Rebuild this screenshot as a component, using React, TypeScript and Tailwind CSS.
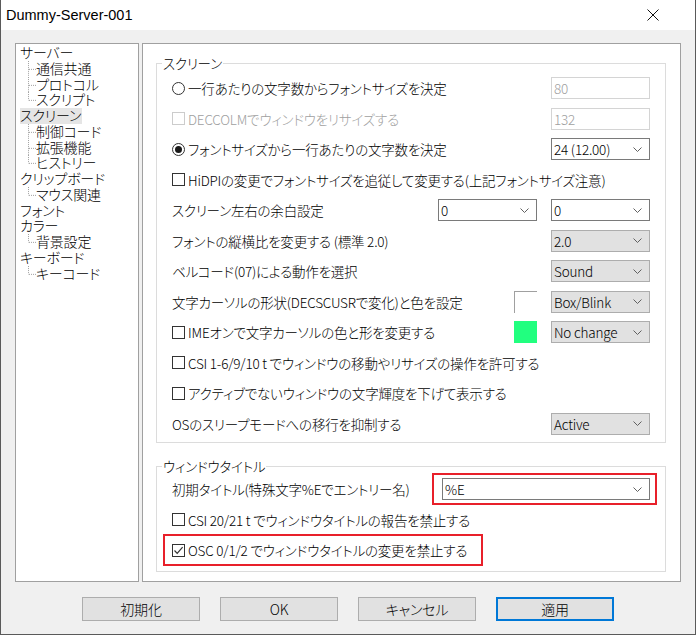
import type { ReactNode } from 'react'

const TREE: { label: string; children?: string[]; active?: boolean }[] = [
  { label: 'サーバー', children: ['通信共通', 'プロトコル', 'スクリプト'] },
  { label: 'スクリーン', children: ['制御コード', '拡張機能', 'ヒストリー'], active: true },
  { label: 'クリップボード', children: ['マウス関連'] },
  { label: 'フォント' },
  { label: 'カラー', children: ['背景設定'] },
  { label: 'キーボード', children: ['キーコード'] },
]

function Branch({ last }: { last: boolean }) {
  return (
    <svg viewBox="0 0 16 16" preserveAspectRatio="none" className="h-[15.75px] w-[16px] shrink-0">
      <line x1="8.5" y1="0" x2="8.5" y2={last ? 8.5 : 16} stroke="#a0a0a0" strokeDasharray="1 1" />
      <line x1="9" y1="8.5" x2="16" y2="8.5" stroke="#a0a0a0" strokeDasharray="1 1" />
    </svg>
  )
}

function Chevron() {
  return (
    <svg width="9" height="5" viewBox="0 0 9 5" className="shrink-0">
      <path d="M0.5 0.5 L4.5 4.5 L8.5 0.5" fill="none" stroke="#606060" strokeWidth="1" />
    </svg>
  )
}

function Select({ value, edit = false, w = 'w-[99px]' }: { value: string; edit?: boolean; w?: string }) {
  return (
    <div
      className={`flex h-[22px] ${w} shrink-0 items-center justify-between border pl-[2px] pr-[7px] ${
        edit ? 'border-[#7a7a7a] bg-white' : 'border-[#adadad] bg-[#e1e1e1]'
      }`}
    >
      <span>{value}</span>
      <Chevron />
    </div>
  )
}

function DisabledInput({ value }: { value: string }) {
  return (
    <div className="flex h-[22px] w-[99px] items-center border border-[#d4d4d4] bg-white pl-[2px] text-[#a0a0a0]">
      {value}
    </div>
  )
}

function Checkbox({ checked = false, disabled = false }: { checked?: boolean; disabled?: boolean }) {
  return (
    <span
      className={`mr-[3px] flex h-[13px] w-[13px] shrink-0 items-center justify-center border bg-white ${
        disabled ? 'border-[#cccccc]' : 'border-[#333333]'
      }`}
    >
      {checked && (
        <svg width="11" height="11" viewBox="0 0 11 11">
          <path d="M1.5 5.5 L4.2 8.3 L9.6 2.2" fill="none" stroke="#333333" strokeWidth="1.2" />
        </svg>
      )}
    </span>
  )
}

function Radio({ checked = false }: { checked?: boolean }) {
  return (
    <span className="mr-[3px] flex h-[13px] w-[13px] shrink-0 items-center justify-center rounded-full border border-[#333333] bg-white">
      {checked && <span className="h-[7px] w-[7px] rounded-full bg-[#1a1a1a]" />}
    </span>
  )
}

function Row({ children, right }: { children: ReactNode; right?: ReactNode }) {
  return (
    <div className="flex h-[30.5px] items-center justify-between">
      <div className="flex items-center whitespace-nowrap">{children}</div>
      {right && <div className="flex items-center gap-[14px]">{right}</div>}
    </div>
  )
}

function Group({ title, children, className = '' }: { title: string; children: ReactNode; className?: string }) {
  return (
    <fieldset className={`border border-[#dcdcdc] px-[15px] ${className}`}>
      <legend className="-ml-[10px] px-[1px] leading-[16px]">{title}</legend>
      {children}
    </fieldset>
  )
}

function Button({ children, primary = false }: { children: ReactNode; primary?: boolean }) {
  return (
    <button
      type="button"
      className={`h-[24px] w-[118px] border bg-[#e1e1e1] text-[14px] ${
        primary ? 'border-[#0078d7] shadow-[inset_0_0_0_1px_#0078d7]' : 'border-[#adadad]'
      }`}
    >
      {children}
    </button>
  )
}

export default function App() {
  return (
    <div className="flex h-[635px] w-[696px] flex-col border-x border-b border-[#5a5a5a] bg-[#f0f0f0] font-['Noto_Sans_CJK_JP',sans-serif] text-[13.5px] font-light leading-[18px] tracking-[-0.2px] text-black [font-feature-settings:'palt']">
      <header className="flex h-[30px] shrink-0 items-center justify-between bg-white pl-[5px] pr-[36px]">
        <span className="font-['Liberation_Sans','Noto_Sans_CJK_JP',sans-serif] text-[14.5px] font-normal tracking-normal">
          Dummy-Server-001
        </span>
        <svg width="12" height="12" viewBox="0 0 12 12">
          <path d="M0.5 0.5 L11.5 11.5 M11.5 0.5 L0.5 11.5" stroke="#111111" strokeWidth="1" />
        </svg>
      </header>

      <div className="flex flex-1 flex-col px-[14px] pt-[13px]">
        <div className="flex h-[539px] gap-[3px]">
          <nav className="w-[124px] shrink-0 border border-[#a0a0a0] bg-white pl-[4px] pt-[1px] text-[14px] leading-[15.75px]">
            {TREE.map((node) => (
              <div key={node.label}>
                <div className="flex h-[15.75px] items-center">
                  <span className={node.active ? 'bg-[#e5e5e5] pr-[1px]' : ''}>{node.label}</span>
                </div>
                {node.children?.map((child, i) => (
                  <div key={child} className="flex h-[15.75px] items-center">
                    <Branch last={i === node.children!.length - 1} />
                    <span>{child}</span>
                  </div>
                ))}
              </div>
            ))}
          </nav>

          <section className="flex-1 border border-[#a0a0a0] bg-white pl-[13px] pr-[14px] pt-[11px]">
            <Group title="スクリーン" className="pb-[3px] pt-[2px]">
              <Row right={<DisabledInput value="80" />}>
                <Radio />
                一行あたりの文字数からフォントサイズを決定
              </Row>
              <Row right={<DisabledInput value="132" />}>
                <Checkbox disabled />
                <span className="text-[#a0a0a0]">DECCOLMでウィンドウをリサイズする</span>
              </Row>
              <Row right={<Select value="24 (12.00)" edit />}>
                <Radio checked />
                フォントサイズから一行あたりの文字数を決定
              </Row>
              <Row>
                <Checkbox />
                HiDPIの変更でフォントサイズを追従して変更する(上記フォントサイズ注意)
              </Row>
              <Row
                right={
                  <>
                    <Select value="0" edit />
                    <Select value="0" edit />
                  </>
                }
              >
                スクリーン左右の余白設定
              </Row>
              <Row right={<Select value="2.0" />}>フォントの縦横比を変更する (標準 2.0)</Row>
              <Row right={<Select value="Sound" />}>ベルコード(07)による動作を選択</Row>
              <Row
                right={
                  <>
                    <span className="h-[22px] w-[23px] border-l border-t border-[#a0a0a0] bg-white" />
                    <Select value="Box/Blink" />
                  </>
                }
              >
                文字カーソルの形状(DECSCUSRで変化)と色を設定
              </Row>
              <Row
                right={
                  <>
                    <span className="h-[22px] w-[23px] bg-[#21ff7f]" />
                    <Select value="No change" />
                  </>
                }
              >
                <Checkbox />
                IMEオンで文字カーソルの色と形を変更する
              </Row>
              <Row>
                <Checkbox />
                CSI 1-6/9/10 t でウィンドウの移動やリサイズの操作を許可する
              </Row>
              <Row>
                <Checkbox />
                アクティブでないウィンドウの文字輝度を下げて表示する
              </Row>
              <Row right={<Select value="Active" />}>OSのスリープモードへの移行を抑制する</Row>
            </Group>

            <Group title="ウィンドウタイトル" className="mt-[15px] pb-[5px]">
              <div className="flex h-[30.5px] items-center justify-between">
                <span className="whitespace-nowrap">初期タイトル(特殊文字%Eでエントリー名)</span>
                <div className="-mr-[7px] flex h-[32px] shrink-0 items-center border-2 border-[#e8202a] pl-[8px] pr-[5px]">
                  <Select value="%E" edit w="w-[208px]" />
                </div>
              </div>
              <Row>
                <Checkbox />
                CSI 20/21 t でウィンドウタイトルの報告を禁止する
              </Row>
              <div className="flex h-[30.5px] items-center">
                <div className="-ml-[9px] flex h-[32px] items-center whitespace-nowrap border-2 border-[#e8202a] pl-[7px] pr-[14px]">
                  <Checkbox checked />
                  OSC 0/1/2 でウィンドウタイトルの変更を禁止する
                </div>
              </div>
            </Group>
          </section>
        </div>

        <div className="mt-[15px] flex justify-center gap-[20px]">
          <Button>初期化</Button>
          <Button>OK</Button>
          <Button>キャンセル</Button>
          <Button primary>適用</Button>
        </div>
      </div>
    </div>
  )
}
